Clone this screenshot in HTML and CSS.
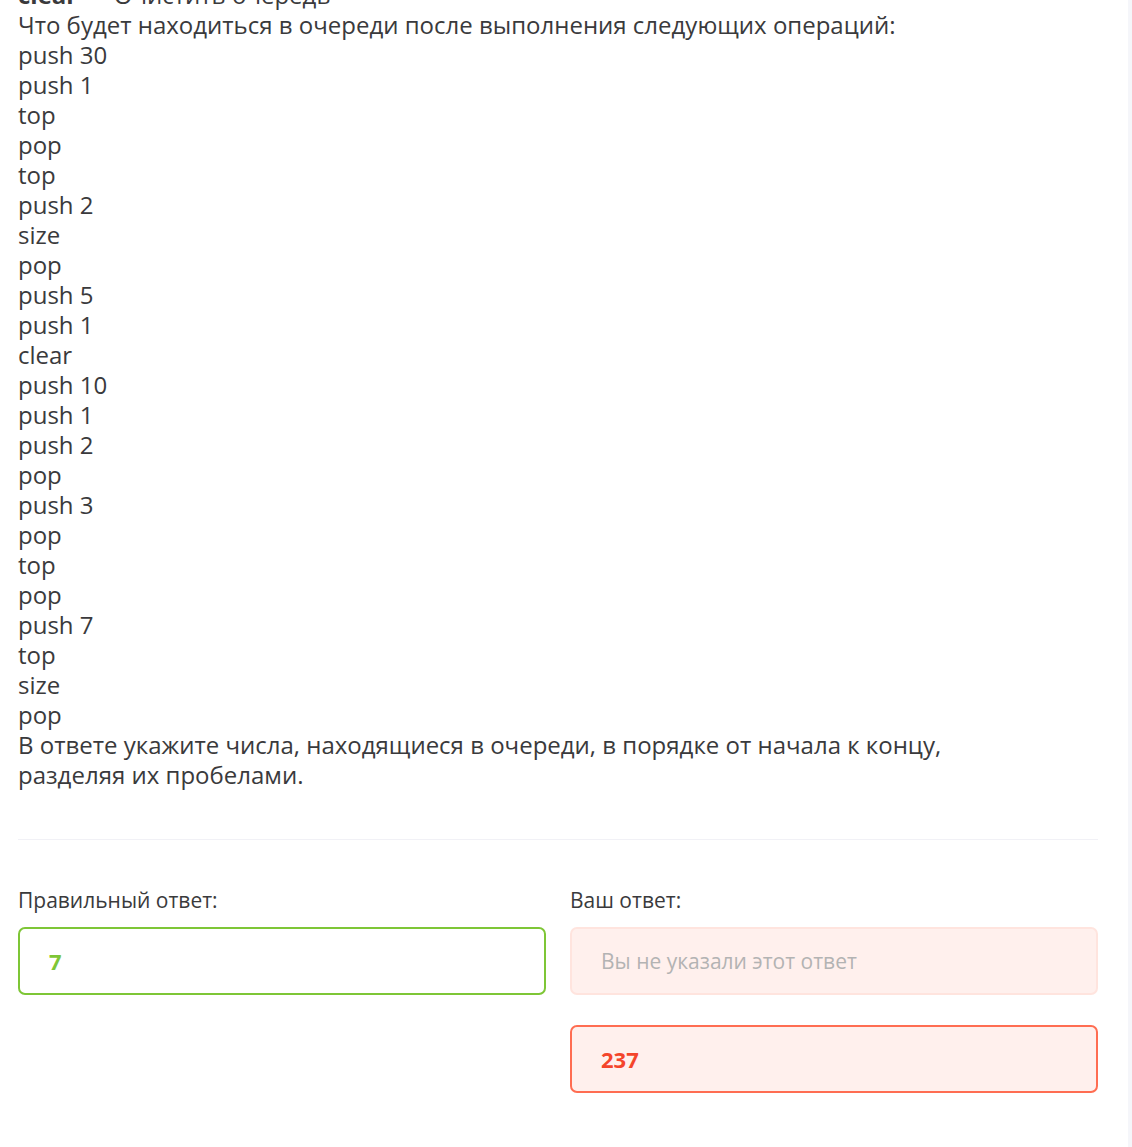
FILE: index.html
```html
<!DOCTYPE html>
<html lang="ru">
<head>
<meta charset="utf-8">
<link rel="stylesheet" href="styles.css">
</head>
<body>
<div class="page">
  <div class="question">
    <div class="line"><b>clear</b> — Очистить очередь</div>
    <div class="line">Что будет находиться в очереди после выполнения следующих операций:</div>
    <div class="line">push 30</div>
    <div class="line">push 1</div>
    <div class="line">top</div>
    <div class="line">pop</div>
    <div class="line">top</div>
    <div class="line">push 2</div>
    <div class="line">size</div>
    <div class="line">pop</div>
    <div class="line">push 5</div>
    <div class="line">push 1</div>
    <div class="line">clear</div>
    <div class="line">push 10</div>
    <div class="line">push 1</div>
    <div class="line">push 2</div>
    <div class="line">pop</div>
    <div class="line">push 3</div>
    <div class="line">pop</div>
    <div class="line">top</div>
    <div class="line">pop</div>
    <div class="line">push 7</div>
    <div class="line">top</div>
    <div class="line">size</div>
    <div class="line">pop</div>
    <div class="line">В ответе укажите числа, находящиеся в очереди, в порядке от начала к концу,<br>разделяя их пробелами.</div>
  </div>
  <hr class="divider">
  <div class="answers">
    <div class="col">
      <div class="label">Правильный ответ:</div>
      <div class="box box-correct">7</div>
    </div>
    <div class="col">
      <div class="label">Ваш ответ:</div>
      <div class="box box-empty">Вы не указали этот ответ</div>
      <div class="box box-wrong">237</div>
    </div>
  </div>
</div>
<div class="scrollstrip"></div>
</body>
</html>
```

FILE: styles.css
```css
html, body {
  margin: 0;
  padding: 0;
  background: #ffffff;
  overflow: hidden;
}
body {
  font-family: "Open Sans", "Noto Sans", sans-serif;
  color: #3a3a3c;
}
.page {
  width: 1080px;
  margin: -20px 0 0 18px;
}
.question {
  font-size: 24px;
  line-height: 30px;
}
.divider {
  border: 0;
  height: 1px;
  background: #f1f1f6;
  margin: 49px 0 0 0;
}
.answers {
  display: grid;
  grid-template-columns: 528px 528px;
  column-gap: 24px;
  margin-top: 48px;
}
.col {
  display: flex;
  flex-direction: column;
}
.label {
  font-size: 21px;
  line-height: 24px;
  height: 24px;
  margin-bottom: 15px;
}
.box {
  box-sizing: border-box;
  height: 68px;
  border: 2px solid;
  border-radius: 7px;
  padding-left: 29px;
  display: flex;
  align-items: center;
}
.box + .box {
  margin-top: 30px;
}
.box-correct {
  border-color: #7ec636;
  color: #7ec636;
  font-weight: 700;
  font-size: 22px;
}
.box-empty {
  border-color: #ffe4de;
  background: #fff0ed;
  color: #b3b3b3;
  font-size: 21px;
}
.box-wrong {
  border-color: #ff6d52;
  background: #fff0ed;
  color: #f4452b;
  font-weight: 700;
  font-size: 22px;
}
.scrollstrip {
  position: fixed;
  top: 0;
  right: 0;
  width: 4px;
  height: 100%;
  background: #f5f6fa;
}
```
